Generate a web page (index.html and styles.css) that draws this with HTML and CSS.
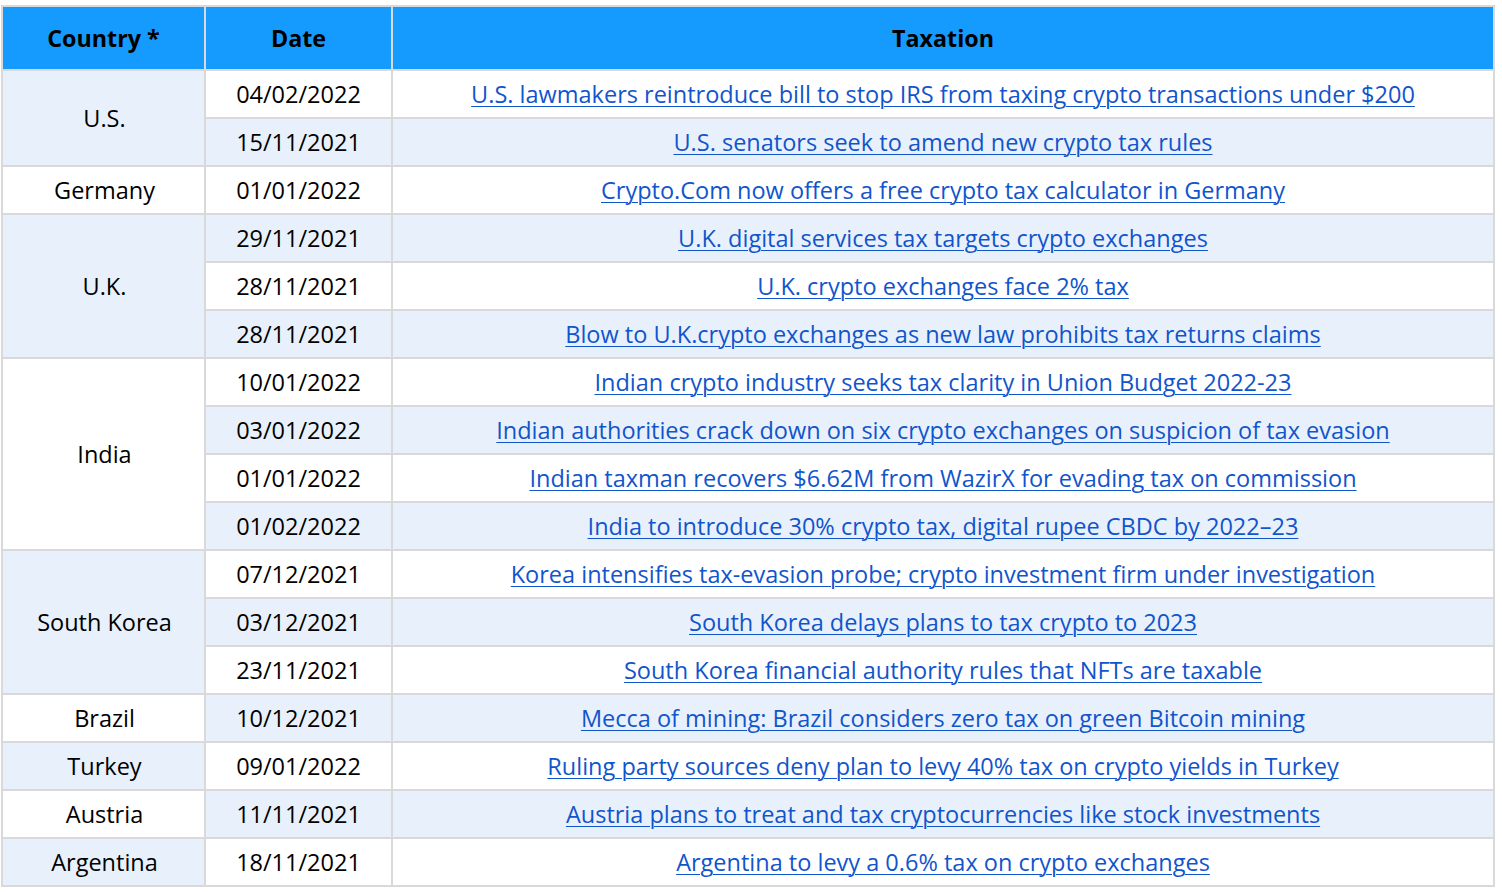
FILE: index.html
```html
<!DOCTYPE html>
<html>
<head>
<meta charset="utf-8">
<link rel="stylesheet" href="styles.css">
</head>
<body>
<table class="tax">
<colgroup><col class="c1"><col class="c2"><col class="c3"></colgroup>
<thead>
<tr><th>Country *</th><th>Date</th><th>Taxation</th></tr>
</thead>
<tbody>
<tr class="w"><td rowspan="2" class="alt">U.S.</td><td>04/02/2022</td><td><a href="#">U.S. lawmakers reintroduce bill to stop IRS from taxing crypto transactions under $200</a></td></tr>
<tr class="b"><td>15/11/2021</td><td><a href="#">U.S. senators seek to amend new crypto tax rules</a></td></tr>
<tr class="w"><td class="plain">Germany</td><td>01/01/2022</td><td><a href="#">Crypto.Com now offers a free crypto tax calculator in Germany</a></td></tr>
<tr class="b"><td rowspan="3" class="alt">U.K.</td><td>29/11/2021</td><td><a href="#">U.K. digital services tax targets crypto exchanges</a></td></tr>
<tr class="w"><td>28/11/2021</td><td><a href="#">U.K. crypto exchanges face 2% tax</a></td></tr>
<tr class="b"><td>28/11/2021</td><td><a href="#">Blow to U.K.crypto exchanges as new law prohibits tax returns claims</a></td></tr>
<tr class="w"><td rowspan="4" class="plain">India</td><td>10/01/2022</td><td><a href="#">Indian crypto industry seeks tax clarity in Union Budget 2022-23</a></td></tr>
<tr class="b"><td>03/01/2022</td><td><a href="#">Indian authorities crack down on six crypto exchanges on suspicion of tax evasion</a></td></tr>
<tr class="w"><td>01/01/2022</td><td><a href="#">Indian taxman recovers $6.62M from WazirX for evading tax on commission</a></td></tr>
<tr class="b"><td>01/02/2022</td><td><a href="#">India to introduce 30% crypto tax, digital rupee CBDC by 2022–23</a></td></tr>
<tr class="w"><td rowspan="3" class="alt">South Korea</td><td>07/12/2021</td><td><a href="#">Korea intensifies tax-evasion probe; crypto investment firm under investigation</a></td></tr>
<tr class="b"><td>03/12/2021</td><td><a href="#">South Korea delays plans to tax crypto to 2023</a></td></tr>
<tr class="w"><td>23/11/2021</td><td><a href="#">South Korea financial authority rules that NFTs are taxable</a></td></tr>
<tr class="b"><td class="plain">Brazil</td><td>10/12/2021</td><td><a href="#">Mecca of mining: Brazil considers zero tax on green Bitcoin mining</a></td></tr>
<tr class="w"><td class="alt">Turkey</td><td>09/01/2022</td><td><a href="#">Ruling party sources deny plan to levy 40% tax on crypto yields in Turkey</a></td></tr>
<tr class="b"><td class="plain">Austria</td><td>11/11/2021</td><td><a href="#">Austria plans to treat and tax cryptocurrencies like stock investments</a></td></tr>
<tr class="w"><td class="alt">Argentina</td><td>18/11/2021</td><td><a href="#">Argentina to levy a 0.6% tax on crypto exchanges</a></td></tr>
</tbody>
</table>
</body>
</html>
```

FILE: styles.css
```css
html, body {
  margin: 0;
  padding: 0;
  background: #ffffff;
}
body {
  padding: 5px 0 0 1px;
  font-family: "Open Sans", "Liberation Sans", sans-serif;
  color: #000;
}
.tax {
  border-collapse: collapse;
  table-layout: fixed;
  width: 1492px;
}
.c1 { width: 203px; }
.c2 { width: 187px; }
.c3 { width: 1102px; }
.tax th, .tax td {
  border: 2px solid #d9d9d9;
  text-align: center;
  vertical-align: middle;
  padding: 0;
  white-space: nowrap;
}
.tax th {
  background: #149bfd;
  font-weight: 700;
  font-size: 23.3px;
  height: 62px;
}
.tax td {
  height: 46px;
  font-size: 23.5px;
}
.tax td.alt, .tax td.plain {
  padding-left: 2px;
}
.tax tr.w td { background: #ffffff; }
.tax tr.b td { background: #e8f1fb; }
.tax tr td.alt { background: #e8f1fb; }
.tax tr td.plain { background: #ffffff; }
.tax a {
  color: #1155cc;
  text-decoration: underline;
  text-underline-offset: 3px;
  text-decoration-thickness: 1px;
}
```
